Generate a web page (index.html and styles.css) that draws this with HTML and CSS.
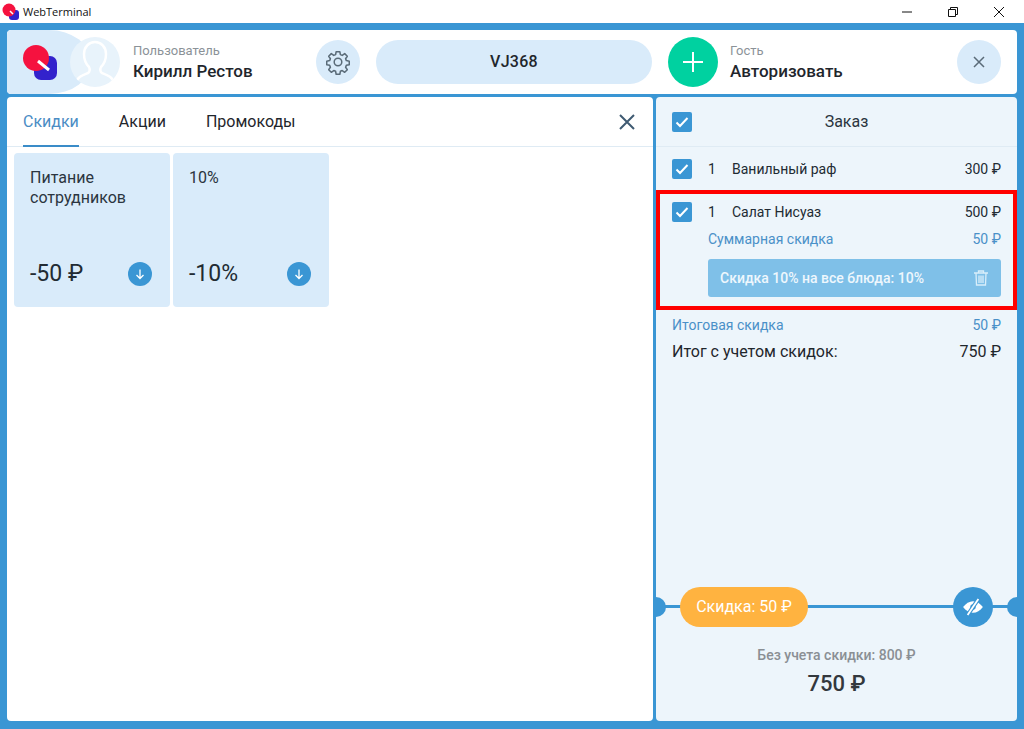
FILE: index.html
```html
<!DOCTYPE html>
<html lang="ru">
  <head>
    <meta charset="UTF-8" />
    <title>WebTerminal</title>
    <link rel="stylesheet" href="styles.css">
  </head>
  <body>
    <div class="titlebar">
      <div class="app-logo">
        <svg width="18" height="18" viewBox="0 0 18 18">
          <rect x="7" y="7" width="10" height="10" rx="3" fill="#3322cc"></rect>
          <circle cx="7" cy="7" r="6.5" fill="#f5123f"></circle>
          <path d="M8 8l3 3" stroke="#fff" stroke-width="1.5"></path>
        </svg>
      </div>
      <span class="app-name">WebTerminal</span>
      <div class="win-btns">
        <svg width="12" height="12" viewBox="0 0 12 12"><path d="M1 6h10" stroke="#111" fill="none"></path></svg>
        <svg width="12" height="12" viewBox="0 0 12 12"><path d="M1.5 3.5h7v7h-7zM3.5 3.5v-2h7v7h-2" stroke="#111" fill="none"></path></svg>
        <svg width="12" height="12" viewBox="0 0 12 12"><path d="M1 1l10 10M11 1L1 11" stroke="#111" fill="none"></path></svg>
      </div>
    </div>

    <div class="app">
      <header class="top">
        <div class="brand">
          <svg width="36" height="36" viewBox="0 0 36 36">
            <rect x="11" y="12" width="23" height="24" rx="7" fill="#3322cc"></rect>
            <circle cx="13" cy="14" r="13" fill="#f5123f"></circle>
            <path d="M15 17l11 9" stroke="#fff" stroke-width="3"></path>
          </svg>
        </div>
        <div class="avatar">
          <svg width="50" height="50" viewBox="0 0 50 50">
            <path d="M6 46c1-6 7-8 12-10 2-1 2-4 1-6-3-3-5-8-5-13 0-7 5-12 11-12s11 5 11 12c0 5-2 10-5 13-1 2-1 5 1 6 5 2 11 4 12 10" fill="none" stroke="#fff" stroke-width="2.500"></path>
          </svg>
        </div>
        <div class="who user">
          <span class="who-label">Пользователь</span>
          <span class="who-name">Кирилл Рестов</span>
        </div>
        <button class="round-btn gear">
          <svg width="26" height="26" viewBox="0 0 24 24" fill="none" stroke="#5a6b78" stroke-width="1.400" stroke-linejoin="round">
            <path d="M10.300 2.500h3.400l.5 2.700 1.700.7 2.300-1.600 2.400 2.400-1.600 2.300.7 1.700 2.700.5v3.400l-2.700.5-.7 1.700 1.600 2.300-2.400 2.400-2.300-1.600-1.700.7-.5 2.700h-3.400l-.5-2.700-1.700-.7-2.300 1.600-2.400-2.400 1.600-2.300-.7-1.700-2.700-.5v-3.400l2.700-.5.7-1.700-1.600-2.300 2.400-2.400 2.300 1.600 1.700-.7z"></path>
            <circle cx="12" cy="12" r="3.500"></circle>
          </svg>
        </button>
        <div class="table-pill">VJ368</div>
        <button class="add-btn">
          <svg width="24" height="24" viewBox="0 0 24 24"><path d="M12 2v20M2 12h20" stroke="#fff" stroke-width="2"></path></svg>
        </button>
        <div class="who guest">
          <span class="who-label">Гость</span>
          <span class="who-name">Авторизовать</span>
        </div>
        <button class="round-btn clear">
          <svg width="12" height="12" viewBox="0 0 12 12"><path d="M1 1l10 10M11 1L1 11" stroke="#5a6b78" stroke-width="1.500"></path></svg>
        </button>
      </header>

      <div class="panels">
        <section class="discounts">
          <nav class="tabs">
            <a class="tab active">Скидки</a>
            <a class="tab">Акции</a>
            <a class="tab">Промокоды</a>
            <svg class="tabs-close" width="16" height="16" viewBox="0 0 16 16"><path d="M1 1l14 14M15 1L1 15" stroke="#3f5a72" stroke-width="2"></path></svg>
          </nav>
          <div class="cards">
            <div class="card">
              <div class="card-title">Питание сотрудников</div>
              <div class="card-foot">
                <span class="card-value">-50 ₽</span>
                <span class="arrow">
                  <svg width="12" height="12" viewBox="0 0 12 12" fill="none" stroke="#fff" stroke-width="1.300"><path d="M6 1.500v9M2.500 7L6 10.500 9.500 7"></path></svg>
                </span>
              </div>
            </div>
            <div class="card">
              <div class="card-title">10%</div>
              <div class="card-foot">
                <span class="card-value">-10%</span>
                <span class="arrow">
                  <svg width="12" height="12" viewBox="0 0 12 12" fill="none" stroke="#fff" stroke-width="1.300"><path d="M6 1.500v9M2.500 7L6 10.500 9.500 7"></path></svg>
                </span>
              </div>
            </div>
          </div>
        </section>

        <aside class="order">
          <div class="order-head">
            <span class="check"><svg width="14" height="12" viewBox="0 0 14 12"><path d="M1.500 6.500l3.500 3.500 7.500-8" fill="none" stroke="#fff" stroke-width="2"></path></svg></span>
            <span class="order-title">Заказ</span>
          </div>
          <div class="dish">
            <span class="check"><svg width="14" height="12" viewBox="0 0 14 12"><path d="M1.500 6.500l3.500 3.500 7.500-8" fill="none" stroke="#fff" stroke-width="2"></path></svg></span>
            <span class="qty">1</span>
            <span class="dish-name">Ванильный раф</span>
            <span>300 ₽</span>
          </div>
          <div class="dish-selected">
            <div class="dish">
              <span class="check"><svg width="14" height="12" viewBox="0 0 14 12"><path d="M1.500 6.500l3.500 3.500 7.500-8" fill="none" stroke="#fff" stroke-width="2"></path></svg></span>
              <span class="qty">1</span>
              <span class="dish-name">Салат Нисуаз</span>
              <span>500 ₽</span>
            </div>
            <div class="dish-discount">
              <span>Суммарная скидка</span>
              <span>50 ₽</span>
            </div>
            <div class="applied">
              <span>Скидка 10% на все блюда: 10%</span>
              <svg width="14" height="16" viewBox="0 0 14 16" fill="none" stroke="#d9eefa" stroke-width="1.300"><path d="M0 3h14M4.500 3V1h5v2M2 3l.5 12h9L12 3M5 5.500V13M7 5.500V13M9 5.500V13"></path></svg>
            </div>
          </div>
          <div class="sum-row discount">
            <span>Итоговая скидка</span>
            <span>50 ₽</span>
          </div>
          <div class="sum-row total">
            <span>Итог с учетом скидок:</span>
            <span>750 ₽</span>
          </div>

          <div class="order-foot">
            <div class="timeline">
              <span class="dot left"></span>
              <span class="discount-pill">Скидка: 50 ₽</span>
              <span class="eye">
                <svg width="22" height="18" viewBox="0 0 24 20">
                  <path d="M1 10c3-4 7-6.500 11-6.500S20 6 23 10c-3 4-7 6.500-11 6.500S4 14 1 10z" fill="#fff"></path>
                  <circle cx="12" cy="10" r="3" fill="#3a96d4"></circle>
                  <path d="M6 19L18 1" stroke="#3a96d4" stroke-width="4.500"></path>
                  <path d="M6 19L18 1" stroke="#fff" stroke-width="2"></path>
                </svg>
              </span>
              <span class="dot right"></span>
            </div>
            <div class="no-discount">Без учета скидки: 800 ₽</div>
            <div class="grand-total">750 ₽</div>
          </div>
        </aside>
      </div>
    </div>
  </body>
</html>
```

FILE: styles.css
```css
* {
  box-sizing: border-box;
}
body {
  margin: 0;
  height: 100vh;
  display: flex;
  flex-direction: column;
  overflow: hidden;
  background-color: #3a96d4;
  font-family: Roboto, "Noto Sans", sans-serif;
  color: #222b33;
}
button {
  border: none;
  padding: 0;
  cursor: pointer;
}

/* window title */
.titlebar {
  display: flex;
  align-items: center;
  height: 23px;
  flex-shrink: 0;
  padding-left: 2px;
  background-color: white;
  font-family: "Open Sans", sans-serif;
  font-size: 11px;
  color: #111;
}
.app-logo {
  display: flex;
  width: 18px;
  height: 18px;
  margin-right: 3px;
}
.win-btns {
  display: flex;
  gap: 34px;
  margin-left: auto;
  padding-right: 19px;
}

.app {
  flex: 1;
  display: flex;
  flex-direction: column;
  gap: 3px;
  min-height: 0;
  padding: 7px 7px 8px 7px;
}

/* top bar */
.top {
  position: relative;
  display: flex;
  align-items: center;
  height: 64px;
  flex-shrink: 0;
  border-radius: 4px;
  background-color: white;
  overflow: hidden;
}
.brand {
  display: flex;
  align-items: center;
  width: 84px;
  height: 64px;
  margin-right: -21px;
  padding-left: 16px;
  border-radius: 4px 50% 50% 4px / 4px 50% 50% 4px;
  background-color: #d9ebfa;
}
.avatar {
  position: relative;
  display: flex;
  width: 50px;
  height: 50px;
  border-radius: 50%;
  background-color: #e8f3fb;
  overflow: hidden;
}
.who {
  display: flex;
  flex-direction: column;
  gap: 3px;
}
.user {
  width: 183px;
  margin-left: 13px;
}
.guest {
  width: 227px;
  margin-left: 12px;
}
.who-label {
  font-size: 13px;
  line-height: 15px;
  color: #8b9298;
}
.who-name {
  font-size: 17px;
  font-weight: 500;
  line-height: 20px;
  color: #1f262c;
}
.round-btn {
  display: flex;
  align-items: center;
  justify-content: center;
  width: 44px;
  height: 44px;
  flex-shrink: 0;
  border-radius: 50%;
  background-color: #d9ebfa;
}
.table-pill {
  width: 276px;
  height: 44px;
  margin: 0 16px;
  border-radius: 22px;
  background-color: #d9ebfa;
  font-size: 16px;
  font-weight: 500;
  letter-spacing: 0.3px;
  line-height: 44px;
  text-align: center;
  color: #1f262c;
}
.add-btn {
  display: flex;
  align-items: center;
  justify-content: center;
  width: 50px;
  height: 50px;
  flex-shrink: 0;
  border-radius: 50%;
  background-color: #00d1a0;
}

.panels {
  flex: 1;
  display: flex;
  gap: 3px;
  min-height: 0;
}

/* left panel */
.discounts {
  width: 646px;
  border-radius: 4px;
  background-color: white;
}
.tabs {
  display: flex;
  align-items: center;
  gap: 40px;
  height: 50px;
  padding: 0 16px;
  border-bottom: 1px solid #dfebf4;
}
.tab {
  display: flex;
  align-items: center;
  height: 50px;
  font-size: 16px;
  color: #1f262c;
}
.tab.active {
  border-bottom: 2px solid #3a8cc8;
  padding-top: 2px;
  color: #4a8cc4;
}
.tabs-close {
  margin-left: auto;
  margin-right: 2px;
}
.cards {
  display: flex;
  gap: 3px;
  padding: 6px 7px;
}
.card {
  display: flex;
  flex-direction: column;
  justify-content: space-between;
  width: 156px;
  height: 154px;
  padding: 15px 18px 20px 16px;
  border-radius: 4px;
  background-color: #d9ebfa;
}
.card-title {
  font-size: 16px;
  line-height: 20px;
  color: #2b3540;
}
.card-foot {
  display: flex;
  align-items: center;
  justify-content: space-between;
}
.card-value {
  font-size: 23px;
  line-height: 26px;
  color: #222b33;
}
.arrow {
  display: flex;
  align-items: center;
  justify-content: center;
  width: 24px;
  height: 24px;
  border-radius: 50%;
  background-color: #3a96d4;
}

/* right panel */
.order {
  flex: 1;
  display: flex;
  flex-direction: column;
  min-width: 0;
  border-radius: 4px;
  background-color: #edf5fb;
  font-size: 14px;
  overflow: hidden;
}
.check {
  display: flex;
  align-items: center;
  justify-content: center;
  width: 20px;
  height: 20px;
  flex-shrink: 0;
  border-radius: 2px;
  background-color: #3a96d4;
}
.order-head {
  display: flex;
  align-items: center;
  height: 50px;
  padding: 0 16px;
  border-bottom: 1px solid #dfebf4;
}
.order-title {
  flex: 1;
  font-size: 16px;
  text-align: center;
  color: #2b3540;
}
.dish {
  display: flex;
  align-items: center;
  height: 43px;
  padding: 0 16px;
  color: #222b33;
}
.qty {
  width: 24px;
  margin-left: 16px;
}
.dish-name {
  flex: 1;
}
.dish-selected {
  height: 120px;
  border: 4px solid #ff0000;
}
.dish-selected .dish {
  height: 36px;
  padding: 0 12px;
}
.dish-discount {
  display: flex;
  justify-content: space-between;
  height: 28px;
  margin: 1px 12px 0 48px;
  line-height: 16px;
  color: #4a90c8;
}
.applied {
  display: flex;
  align-items: center;
  justify-content: space-between;
  height: 38px;
  margin: 0 12px 0 48px;
  padding: 0 13px 0 12px;
  border-radius: 3px;
  background-color: #7fc0e8;
  font-weight: 500;
  color: #eef7fd;
}
.sum-row {
  display: flex;
  justify-content: space-between;
  padding: 0 16px;
}
.sum-row.discount {
  margin-top: 7px;
  line-height: 16px;
  color: #4a90c8;
}
.sum-row.total {
  margin-top: 9px;
  font-size: 16px;
  line-height: 20px;
  color: #1f262c;
}
.order-foot {
  margin-top: auto;
  padding-bottom: 24px;
}
.timeline {
  position: relative;
  display: flex;
  align-items: center;
  justify-content: space-between;
  height: 40px;
  padding: 0 24px;
  margin-bottom: 19px;
}
.timeline::before {
  content: "";
  position: absolute;
  top: 18px;
  left: 0;
  right: 0;
  height: 3px;
  background-color: #3a96d4;
}
.dot {
  position: absolute;
  top: 10px;
  width: 20px;
  height: 20px;
  border-radius: 50%;
  background-color: #3a96d4;
}
.dot.left {
  left: -10px;
}
.dot.right {
  right: -10px;
}
.discount-pill {
  position: relative;
  width: 128px;
  height: 40px;
  border-radius: 20px;
  background-color: #ffb340;
  font-size: 16px;
  line-height: 40px;
  text-align: center;
  color: white;
}
.eye {
  position: relative;
  display: flex;
  align-items: center;
  justify-content: center;
  width: 40px;
  height: 40px;
  border-radius: 50%;
  background-color: #3a96d4;
}
.no-discount {
  font-size: 14px;
  font-weight: 500;
  line-height: 18px;
  text-align: center;
  color: #8a8f94;
}
.grand-total {
  margin-top: 7px;
  font-size: 22px;
  font-weight: 500;
  line-height: 26px;
  text-align: center;
  color: #33383d;
}
```
